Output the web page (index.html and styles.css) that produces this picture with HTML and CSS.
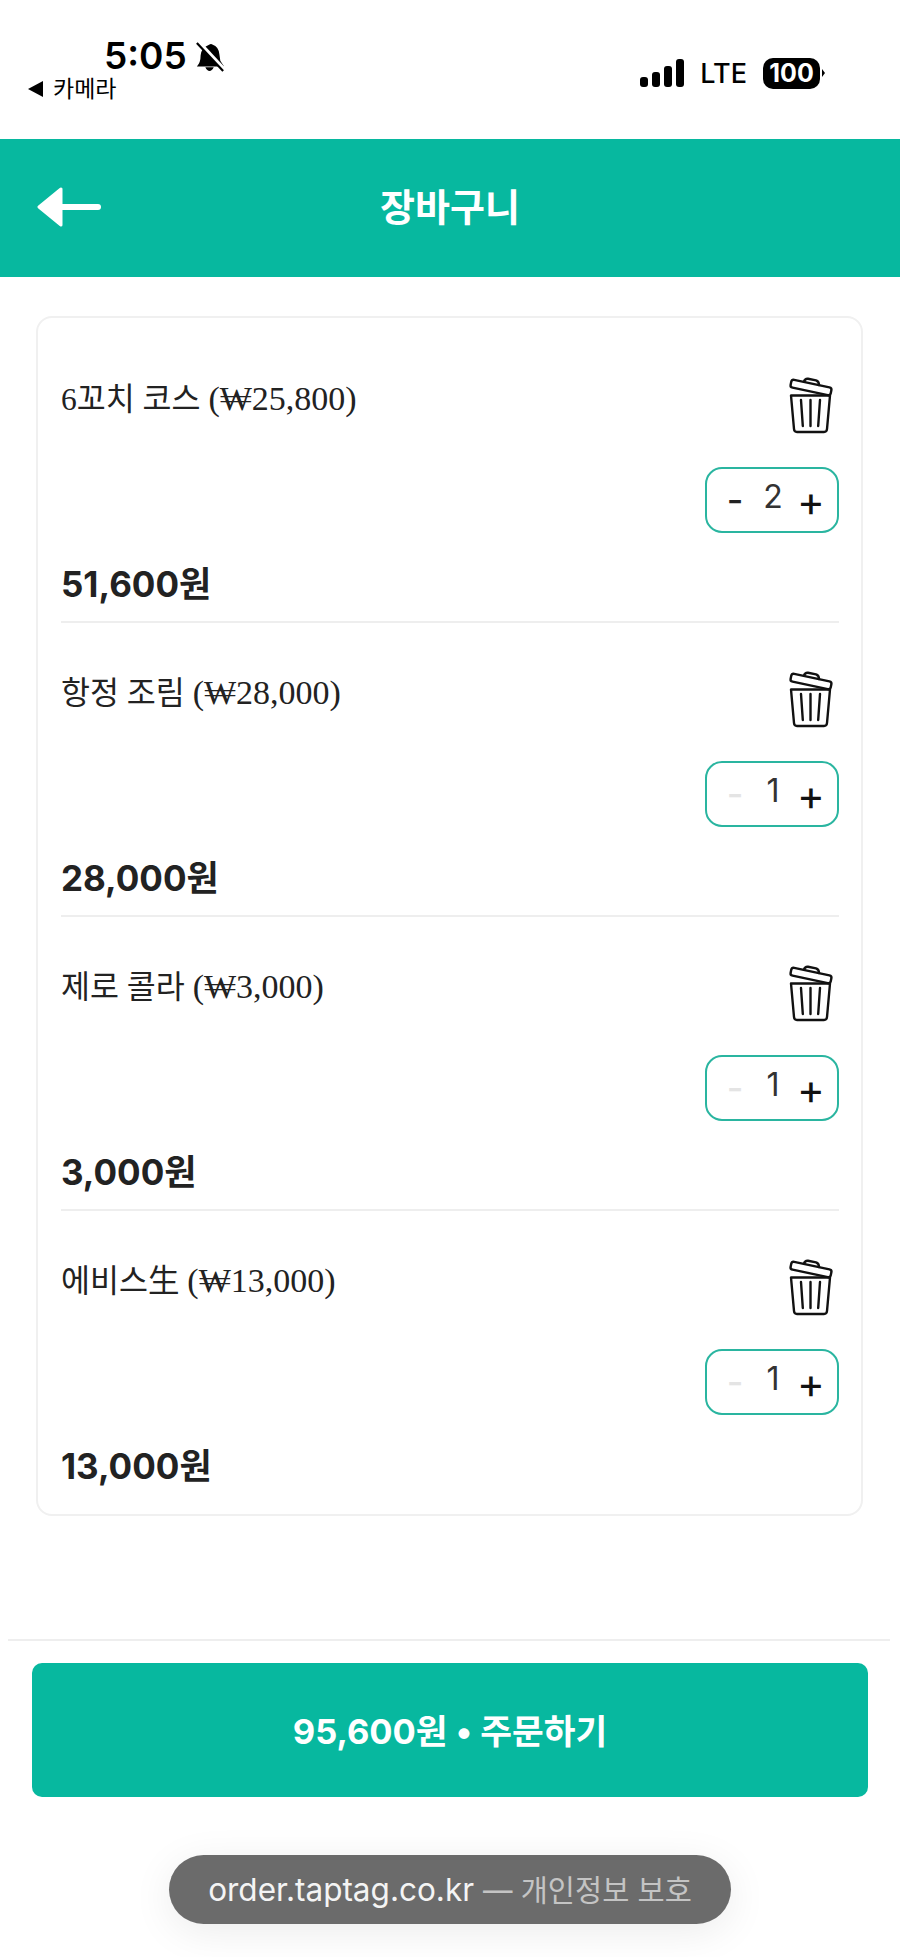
FILE: index.html
```html
<!DOCTYPE html>
<html lang="ko">

<head>
    <meta charset="UTF-8">
    <meta name="viewport" content="width=device-width, initial-scale=1.0">
    <title>장바구니</title>
    <link rel="stylesheet" href="styles.css">
</head>

<body>
    <svg class="iconDefs" width="0" height="0">
        <symbol id="trash" viewBox="0 0 46 57">
            <g fill="none" stroke="#111" stroke-width="2.4" stroke-linecap="round" stroke-linejoin="round">
                <rect x="2.5" y="6.5" width="41" height="8" rx="2.5" transform="rotate(12 23 10.5)" />
                <path d="M16 4.5 Q17 1.5 20 1.8 L28 3.4 Q31 4.4 31 8" />
                <path d="M3 18.5 H42 L39 52 Q38.8 55 36 55 H9 Q6.2 55 6 52 Z" />
                <path d="M13 23 L14.8 49 M22.5 23 V49 M32 23 L30.2 49" />
            </g>
        </symbol>
    </svg>

    <div class="statusBar">
        <div class="statusLeft">
            <div class="clockRow">
                <span class="clock">5:05</span>
                <svg class="bell" width="30" height="32" viewBox="0 0 32 32">
                    <path d="M15 3 Q17 1 19 3 Q25 5 26 13 L27 20 L31 26 H2 Q6 22 6 14 Q7 6 15 3 Z M11 27 H20 Q18 31 15.5 31 Q13 31 11 27 Z" fill="#000" />
                    <path d="M4 0 L32 30" stroke="#fff" stroke-width="4" />
                    <path d="M2 1 L30 31" stroke="#000" stroke-width="2.4" />
                </svg>
            </div>
            <div class="backApp"><span class="backMark"></span>카메라</div>
        </div>
        <div class="statusRight">
            <div class="signal">
                <span class="bar1"></span>
                <span class="bar2"></span>
                <span class="bar3"></span>
                <span class="bar4"></span>
            </div>
            <span class="network">LTE</span>
            <div class="battery">100</div>
            <span class="batteryCap"></span>
        </div>
    </div>

    <header class="topBar">
        <svg class="backArrow" width="64" height="42" viewBox="0 0 64 42">
            <path d="M2 21 L24 3 V39 Z" fill="#fff" stroke="#fff" stroke-width="3" stroke-linejoin="round" />
            <path d="M22 21 H61" stroke="#fff" stroke-width="6" stroke-linecap="round" />
        </svg>
        <h1>장바구니</h1>
    </header>

    <main class="cart">
        <div class="cartCard">
            <section class="cartItem">
                <div class="itemTop">
                    <span class="itemName">6꼬치 코스 <span class="itemUnit">(₩25,800)</span></span>
                    <svg class="trashIcon"><use href="#trash" /></svg>
                </div>
                <div class="stepper">
                    <button class="stepBtn minus">-</button>
                    <span class="qty">2</span>
                    <button class="stepBtn plus">+</button>
                </div>
                <div class="itemPrice">51,600원</div>
            </section>
            <section class="cartItem">
                <div class="itemTop">
                    <span class="itemName">항정 조림 <span class="itemUnit">(₩28,000)</span></span>
                    <svg class="trashIcon"><use href="#trash" /></svg>
                </div>
                <div class="stepper">
                    <button class="stepBtn minus off">-</button>
                    <span class="qty">1</span>
                    <button class="stepBtn plus">+</button>
                </div>
                <div class="itemPrice">28,000원</div>
            </section>
            <section class="cartItem">
                <div class="itemTop">
                    <span class="itemName">제로 콜라 <span class="itemUnit">(₩3,000)</span></span>
                    <svg class="trashIcon"><use href="#trash" /></svg>
                </div>
                <div class="stepper">
                    <button class="stepBtn minus off">-</button>
                    <span class="qty">1</span>
                    <button class="stepBtn plus">+</button>
                </div>
                <div class="itemPrice">3,000원</div>
            </section>
            <section class="cartItem">
                <div class="itemTop">
                    <span class="itemName">에비스生 <span class="itemUnit">(₩13,000)</span></span>
                    <svg class="trashIcon"><use href="#trash" /></svg>
                </div>
                <div class="stepper">
                    <button class="stepBtn minus off">-</button>
                    <span class="qty">1</span>
                    <button class="stepBtn plus">+</button>
                </div>
                <div class="itemPrice">13,000원</div>
            </section>
        </div>
    </main>

    <footer class="orderBar">
        <button class="orderBtn">95,600원 • 주문하기</button>
    </footer>

    <div class="urlPill">order.taptag.co.kr <span class="urlNote">— 개인정보 보호</span></div>
</body>

</html>
```

FILE: styles.css
```css
/* Cart screen, phone sized */

html, body {
    margin: 0;
    padding: 0;
}

body {
    position: relative;
    height: 1957px;
    overflow: hidden;
    background-color: #fff;
    color: #222;
    font-family: Inter, "Noto Sans CJK KR", sans-serif;
}

button {
    border: none;
    background: none;
    padding: 0;
    font-family: inherit;
    color: inherit;
}

.iconDefs {
    position: absolute;
}

/* status bar */

.statusBar {
    display: flex;
    justify-content: space-between;
    height: 139px;
    box-sizing: border-box;
    padding: 35px 75px 0 28px;
    color: #000;
}

.clockRow {
    display: flex;
    align-items: center;
    gap: 8px;
    margin-left: 76px;
    height: 42px;
}

.clock {
    font-size: 37px;
    font-weight: 600;
    line-height: 42px;
}

.bell {
    margin-top: 1px;
}

.backApp {
    display: flex;
    align-items: center;
    font-size: 23px;
    line-height: 30px;
    margin-top: -3px;
}

.backMark {
    width: 0;
    height: 0;
    border-style: solid;
    border-width: 8px 15px 8px 0;
    border-color: transparent #000 transparent transparent;
    margin-right: 10px;
}

.statusRight {
    display: flex;
    align-items: center;
    height: 44px;
    margin-top: 16px;
}

.signal {
    display: flex;
    align-items: flex-end;
    gap: 4px;
    margin-right: 16px;
}

.signal span {
    width: 8px;
    background-color: #000;
    border-radius: 3px;
}

.bar1 { height: 10px; }
.bar2 { height: 15px; }
.bar3 { height: 21px; }
.bar4 { height: 28px; }

.network {
    font-size: 27px;
    font-weight: 500;
    margin-right: 16px;
}

.battery {
    width: 57px;
    height: 31px;
    line-height: 31px;
    background-color: #000;
    border-radius: 10px;
    color: #fff;
    font-size: 25px;
    font-weight: 700;
    text-align: center;
}

.batteryCap {
    width: 0;
    height: 0;
    margin-left: 2px;
    border-style: solid;
    border-width: 4px 0 4px 3px;
    border-color: transparent transparent transparent #000;
}

/* header */

.topBar {
    position: relative;
    display: flex;
    align-items: center;
    justify-content: center;
    height: 138px;
    box-sizing: border-box;
    padding-bottom: 7px;
    background-color: #07b89f;
}

.topBar h1 {
    margin: 0;
    color: #fff;
    font-size: 38px;
    font-weight: 600;
}

.backArrow {
    position: absolute;
    left: 37px;
    top: 47px;
}

/* cart list */

.cart {
    padding: 39px 37px 0 36px;
}

.cartCard {
    border: 2px solid #f0f0f0;
    border-radius: 16px;
    padding: 11px 22px 11px 23px;
}

.cartItem {
    height: 292px;
    border-bottom: 2px solid #eee;
}

.cartItem:last-child {
    border-bottom: none;
}

.itemTop {
    display: flex;
    justify-content: space-between;
    align-items: flex-start;
    padding: 48px 5px 0 0;
}

.itemName {
    font-family: "Liberation Serif", "Noto Sans CJK KR", serif;
    font-size: 31.5px;
    line-height: 44px;
    color: #222;
}

.itemUnit {
    font-size: 34px;
}

.trashIcon {
    width: 46px;
    height: 57px;
}

.stepper {
    display: flex;
    align-items: center;
    width: 134px;
    height: 66px;
    box-sizing: border-box;
    margin: 33px 0 0 auto;
    border: 2px solid #2ab5a0;
    border-radius: 17px;
    padding: 0 11px 0 13px;
}

.stepBtn {
    width: 30px;
    font-size: 36px;
    line-height: 40px;
    text-align: center;
}

.plus {
    margin-top: 1px;
    color: #111;
    font-size: 42px;
    font-weight: 400;
}

.minus {
    font-weight: 500;
}

.minus.off {
    color: #e4e4e4;
}

.qty {
    flex: 1;
    text-align: center;
    font-size: 32px;
    font-weight: 400;
    line-height: 40px;
    margin-top: -6px;
    color: #333;
}

.itemPrice {
    margin-top: 29px;
    font-size: 35px;
    font-weight: 700;
    line-height: 44px;
    color: #222;
}

/* bottom order bar */

.orderBar {
    margin: 123px 10px 0 8px;
    border-top: 2px solid #eee;
    padding: 22px 22px 0 24px;
}

.orderBtn {
    display: block;
    width: 100%;
    height: 134px;
    box-sizing: border-box;
    padding-bottom: 2px;
    border-radius: 10px;
    background-color: #07b89f;
    color: #fff;
    font-size: 34.5px;
    font-weight: 700;
}

.urlPill {
    position: absolute;
    left: 169px;
    top: 1855px;
    width: 562px;
    height: 69px;
    line-height: 69px;
    border-radius: 35px;
    background-color: #6b6b6b;
    box-shadow: 0 8px 40px rgba(0, 0, 0, 0.08);
    color: #f4f4f4;
    font-size: 31.5px;
    text-align: center;
}

.urlNote {
    color: #c4c4c4;
    font-size: 29.5px;
}
```
